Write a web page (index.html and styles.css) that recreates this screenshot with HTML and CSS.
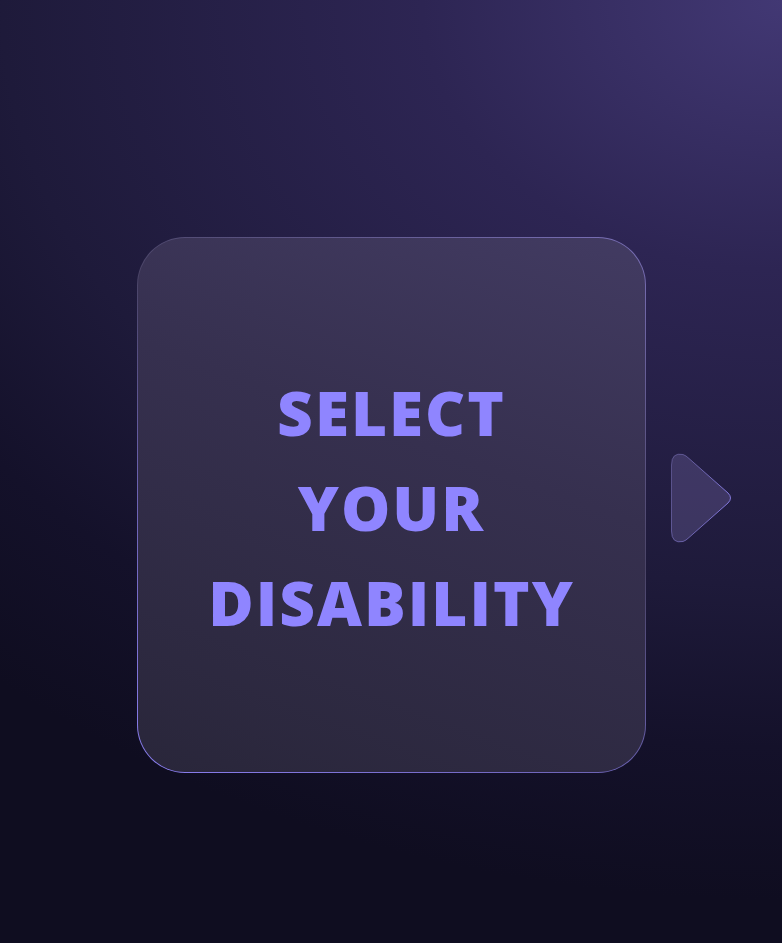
FILE: index.html
```html
<!DOCTYPE html>
<html>
<head>
<meta charset="utf-8">
<link rel="stylesheet" href="styles.css">
</head>
<body>
<main class="stage">
  <section class="card">
    <h1 class="title">SELECT<br>YOUR<br>DISABILITY</h1>
  </section>
  <button class="next" aria-label="Next">
    <svg width="64" height="94" viewBox="0 0 64 94">
      <defs>
        <linearGradient id="stroke" x1="0" y1="0" x2="1" y2="0.3">
          <stop offset="0" stop-color="#7c74b8" stop-opacity="0.5"/>
          <stop offset="1" stop-color="#8a7fe8" stop-opacity="0.9"/>
        </linearGradient>
      </defs>
      <path d="M1.5 14 Q1.5 1 13 3.5 Q16 4.5 19 7.5 L58 42 Q63 47 58 52 L19 86.5 Q16 89.5 13 90.5 Q1.5 93 1.5 80 Z" fill="rgba(120,110,170,0.32)" stroke="url(#stroke)" stroke-width="1"/>
    </svg>
  </button>
</main>
</body>
</html>
```
FILE: styles.css
```css
html, body {
  margin: 0;
  padding: 0;
  height: 100%;
}
body {
  background: radial-gradient(ellipse 1200px 900px at 100% 0%, #423874 0%, #2d2553 30%, #1e1a3a 65%, #14112a 83%, #0f0d20 100%);
  font-family: "Open Sans", "Noto Sans", sans-serif;
  overflow: hidden;
}
.stage {
  width: 782px;
  height: 943px;
  display: flex;
  align-items: center;
  box-sizing: border-box;
  padding-left: 137px;
  padding-top: 67px;
}
.card {
  width: 509px;
  height: 536px;
  box-sizing: border-box;
  border-radius: 48px;
  border: 1px solid transparent;
  background:
    linear-gradient(200deg, #423b62 0%, #36304f 40%, #29263a 100%) padding-box,
    linear-gradient(30deg, #8a7ef0 0%, #6a61b0 35%, #4a4466 60%, #7a70b8 100%) border-box;
  display: flex;
  align-items: center;
  justify-content: center;
}
.title {
  margin: 0;
  text-align: center;
  color: #8f85ff;
  font-size: 62px;
  font-weight: 800;
  line-height: 95px;
  letter-spacing: 2px;
  padding-top: 4px;
}
.next {
  margin-left: 24px;
  margin-bottom: 14px;
  padding: 0;
  border: 0;
  background: none;
  width: 64px;
  height: 94px;
  display: block;
  cursor: pointer;
}
.next svg {
  display: block;
}
```
